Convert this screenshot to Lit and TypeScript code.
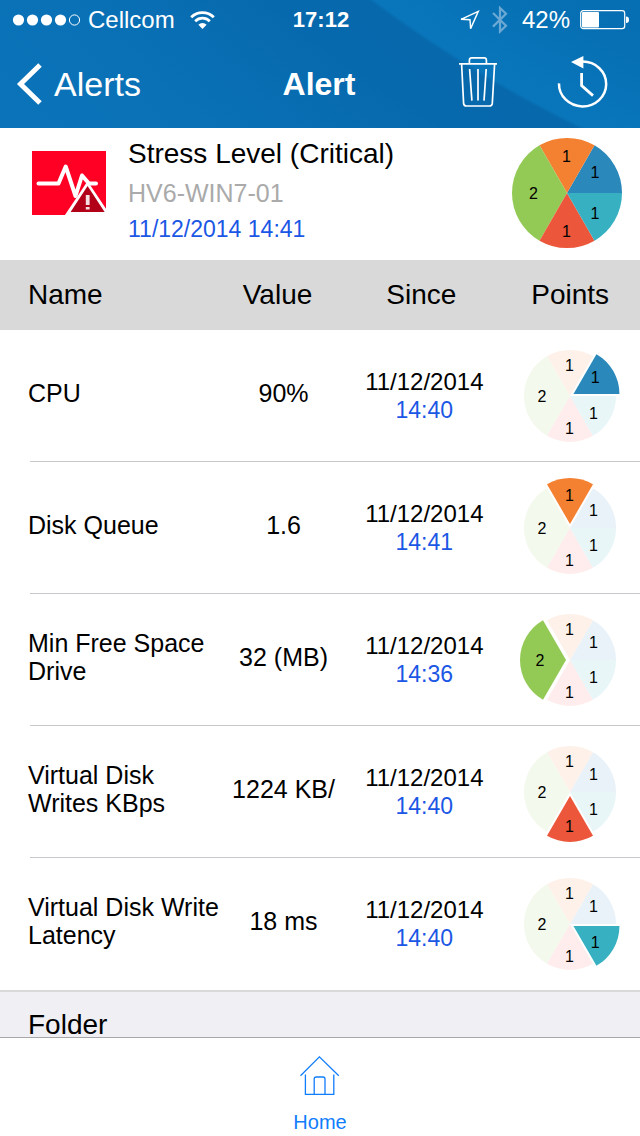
import { LitElement, html, svg, css } from "lit";
import { customElement, property } from "lit/decorators.js";
import { classMap } from "lit/directives/class-map.js";

type Slice = {
  key: string;
  from: number;
  to: number;
  points: number;
  color: string;
  faded: string;
  /** Label centre as a share of the pie radius. */
  lx: number;
  ly: number;
};

const SLICES: Slice[] = [
  { key: "cpu", from: -60, to: 0, points: 1, color: "#2a88ba", faded: "#e9f2f8", lx: 0.51, ly: -0.36 },
  { key: "queue", from: -120, to: -60, points: 1, color: "#f48031", faded: "#fdf1e9", lx: -0.01, ly: -0.66 },
  { key: "space", from: 120, to: 240, points: 2, color: "#93ca55", faded: "#f3f9ed", lx: -0.61, ly: 0.02 },
  { key: "writes", from: 60, to: 120, points: 1, color: "#ec563a", faded: "#feedec", lx: -0.01, ly: 0.71 },
  { key: "latency", from: 0, to: 60, points: 1, color: "#37b1c1", faded: "#e8f6f8", lx: 0.51, ly: 0.39 },
];

const rad = (deg: number) => (deg * Math.PI) / 180;

@customElement("points-pie")
class PointsPie extends LitElement {
  @property({ type: Number }) radius = 46;
  @property() active = "";

  static styles = css`
    :host {
      display: inline-block;
      vertical-align: middle;
      line-height: 0;
    }
    text {
      font: 16px "Liberation Sans", Arial, sans-serif;
      text-anchor: middle;
    }
  `;

  render() {
    const r = this.radius;
    const pad = this.active ? 4 : 0;
    const half = r + pad;
    return html`<svg width=${half * 2} height=${half * 2} viewBox="${-half} ${-half} ${half * 2} ${half * 2}" role="img" aria-label="Points">
      ${SLICES.map((s) => {
        const on = this.active === s.key;
        const mid = rad((s.from + s.to) / 2);
        const ox = on ? Math.cos(mid) * 4 : 0;
        const oy = on ? Math.sin(mid) * 4 : 0;
        const x1 = ox + r * Math.cos(rad(s.from));
        const y1 = oy + r * Math.sin(rad(s.from));
        const x2 = ox + r * Math.cos(rad(s.to));
        const y2 = oy + r * Math.sin(rad(s.to));
        return svg`
          <path fill=${this.active && !on ? s.faded : s.color}
            d="M${ox} ${oy}L${x1} ${y1}A${r} ${r} 0 0 1 ${x2} ${y2}Z"></path>
          <text x=${s.lx * r + ox / 2} y=${s.ly * r + oy / 2 + 5}>${s.points}</text>`;
      })}
    </svg>`;
  }
}

type Row = { key: string; name: string; value: string; date: string; time: string };

const ROWS: Row[] = [
  { key: "cpu", name: "CPU", value: "90%", date: "11/12/2014", time: "14:40" },
  { key: "queue", name: "Disk Queue", value: "1.6", date: "11/12/2014", time: "14:41" },
  { key: "space", name: "Min Free Space Drive", value: "32 (MB)", date: "11/12/2014", time: "14:36" },
  { key: "writes", name: "Virtual Disk Writes KBps", value: "1224 KB/", date: "11/12/2014", time: "14:40" },
  { key: "latency", name: "Virtual Disk Write Latency", value: "18 ms", date: "11/12/2014", time: "14:40" },
];

@customElement("app-root")
class AppRoot extends LitElement {
  static styles = css`
    :host {
      display: flex;
      flex-direction: column;
      height: 100vh;
      background: #fff;
      color: #000;
      font-family: "Liberation Sans", Arial, sans-serif;
      font-size: 24px;
      line-height: 28px;
    }
    svg {
      display: block;
      flex: none;
    }
    .top {
      flex: none;
      color: #fff;
      background: radial-gradient(
        circle at calc(100% + 510px) -1040px,
        #0870b3 1080px,
        #066eb2 1180px,
        #0976bb 1297px,
        #0768ac 1301px,
        #0769ad 1360px,
        #0a71b7 1500px,
        #0b74b9 1700px
      );
    }
    .status {
      display: grid;
      grid-template-columns: 1fr auto 1fr;
      align-items: center;
      height: 40px;
      padding: 0 10px 0 12px;
    }
    .cluster {
      display: flex;
      align-items: center;
    }
    .carrier {
      padding: 0 15px 0 8px;
    }
    .clock {
      font-weight: bold;
      font-size: 22px;
    }
    .end {
      justify-content: flex-end;
    }
    .bluetooth {
      margin: 0 14px 0 12px;
    }
    .battery {
      margin-left: 10px;
    }
    .nav {
      display: grid;
      grid-template-columns: 1fr auto 1fr;
      align-items: center;
      height: 88px;
      padding: 0 32px 0 16px;
    }
    .back {
      display: flex;
      align-items: center;
      gap: 12px;
      color: inherit;
      text-decoration: none;
      font-size: 34px;
      line-height: 40px;
    }
    h1 {
      margin: 0 0 0 14px;
      font-size: 32px;
      line-height: 40px;
    }
    .actions {
      display: flex;
      align-items: center;
      justify-content: flex-end;
      gap: 60px;
      margin-bottom: 4px;
    }
    button {
      padding: 0;
      border: 0;
      background: none;
      color: inherit;
    }
    main {
      flex: 1;
      min-height: 0;
      overflow-y: auto;
      scrollbar-width: none;
    }
    .summary {
      display: flex;
      align-items: center;
      gap: 22px;
      height: 132px;
      padding: 0 18px 0 32px;
      box-sizing: border-box;
    }
    .stress {
      margin-bottom: 22px;
    }
    .about {
      flex: 1;
      margin-bottom: 8px;
    }
    .total {
      margin-bottom: 2px;
    }
    h2 {
      margin: 0;
      font-weight: normal;
      font-size: 28px;
      line-height: 40px;
    }
    .host {
      color: #aaa;
      font-size: 25px;
      line-height: 38px;
    }
    .stamp {
      font-size: 23px;
      line-height: 34px;
    }
    .blue {
      color: #1b57e5;
    }
    table {
      width: 100%;
      border-collapse: collapse;
      table-layout: fixed;
    }
    .c-name {
      width: 34.8%;
    }
    .c-value {
      width: 19%;
    }
    .c-since {
      width: 25%;
    }
    th {
      height: 70px;
      padding: 0;
      background: #d9d9d9;
      font-weight: normal;
      font-size: 28px;
    }
    td {
      height: 132px;
      padding: 0;
      text-align: center;
      font-size: 25px;
    }
    th.name,
    td.name {
      padding-left: 28px;
      text-align: left;
    }
    th.value {
      padding-right: 12px;
    }
    th.since {
      padding-right: 6px;
    }
    td.name,
    td.value {
      padding-bottom: 6px;
      box-sizing: border-box;
    }
    .points {
      padding-right: 4px;
    }
    .ruled {
      background: linear-gradient(#c8c7cc, #c8c7cc) 30px 100% / 100% 1px no-repeat;
    }
    td.since {
      font-size: 24px;
    }
    .since time {
      display: block;
    }
    .since .blue {
      font-size: 23px;
    }
    .folder {
      height: 72px;
      padding: 22px 28px 0;
      border-top: 2px solid #d9d9d9;
      box-sizing: border-box;
      background: #efeff4;
    }
    .folder h2 {
      line-height: 22px;
    }
    .tabs {
      flex: none;
      display: flex;
      justify-content: center;
      border-top: 1px solid #a7a7ab;
      background: #fff;
    }
    .tab {
      display: flex;
      flex-direction: column;
      align-items: center;
      gap: 14px;
      padding: 18px 20px 2px;
      color: #107dfc;
      text-decoration: none;
      font-size: 20px;
      line-height: 24px;
    }
  `;

  private statusBar() {
    return html`<div class="status">
      <div class="cluster">
        <svg width="68" height="12" viewBox="0 0 68 12" fill="#fff">
          ${[6.5, 20.5, 34.5, 48.5].map((x) => svg`<circle cx=${x} cy="6" r="5.6"></circle>`)}
          <circle cx="62.5" cy="6" r="5.1" fill="none" stroke="#fff"></circle>
        </svg>
        <span class="carrier">Cellcom</span>
        <svg width="25" height="18" viewBox="0 0 25 18" fill="none" stroke="#fff" stroke-width="2.8">
          <path d="M1.2 6.2A16 16 0 0 1 23.8 6.2"></path>
          <path d="M5.2 10.2A10.4 10.4 0 0 1 19.8 10.2"></path>
          <path d="M12.5 18L8.4 13.8A5.8 5.8 0 0 1 16.6 13.8Z" fill="#fff" stroke="none"></path>
        </svg>
      </div>
      <span class="clock">17:12</span>
      <div class="cluster end">
        <svg width="21" height="21" viewBox="0 0 21 21" fill="none" stroke="#fff" stroke-width="1.4">
          <path d="M19.3 1.4L2 9.3L11 9.7L11.6 18.6Z"></path>
        </svg>
        <svg class="bluetooth" width="16" height="28" viewBox="0 0 16 28" fill="none" stroke="#6ba9d4" stroke-width="2.2">
          <path d="M1 7L14 19.8L8 25.5V2L14 7.8L1 20.6"></path>
        </svg>
        <span>42%</span>
        <svg class="battery" width="50" height="20" viewBox="0 0 50 20">
          <rect x="0.7" y="0.7" width="44" height="18" rx="2.6" fill="none" stroke="#fff" stroke-width="1.2"></rect>
          <rect x="2" y="2" width="17" height="15.5" rx="1" fill="#fff"></rect>
          <path d="M46 6.5Q49 6.5 49 9.8T46 13Z" fill="#fff"></path>
        </svg>
      </div>
    </div>`;
  }

  private navBar() {
    return html`<nav class="nav">
      <a class="back" href="#alerts">
        <svg width="26" height="42" viewBox="0 0 26 42" fill="none" stroke="#fff" stroke-width="5">
          <path d="M24 2L4.5 21L24 40"></path>
        </svg>
        Alerts
      </a>
      <h1>Alert</h1>
      <div class="actions">
        <button type="button" aria-label="Delete">
          <svg width="38" height="50" viewBox="0 0 38 50" fill="none" stroke="#fff" stroke-width="1.7">
            <path d="M0 6.8H38"></path>
            <path d="M10.4 6.5V3.2Q10.4 0.9 12.8 0.9H25Q27.4 0.9 27.4 3.2V6.5"></path>
            <path d="M2.6 7L4.6 46.4Q4.8 49 7.4 49H30.4Q33 49 33.3 46.4L35.6 7"></path>
            <path d="M10.6 12L12.9 43.6M19 12V43.6M27.2 12L25 43.6"></path>
          </svg>
        </button>
        <button type="button" aria-label="History">
          <svg width="51" height="52" viewBox="0 0 51 52" fill="none" stroke="#fff" stroke-width="2.5">
            <path d="M2 27.4A23.6 22.4 0 1 0 25.6 5.6"></path>
            <path d="M14 6L26.4 0V12.4Z" fill="#fff" stroke="none"></path>
            <path d="M24.6 17V29.6L36 39.6" stroke-width="2.8"></path>
          </svg>
        </button>
      </div>
    </nav>`;
  }

  private summary() {
    return html`<section class="summary">
      <svg class="stress" width="74" height="64" viewBox="0 0 74 64">
        <rect width="74" height="64" fill="#ff0024"></rect>
        <path d="M6.5 32.5H26.5L33.7 15.5L43.5 45L50 24.5L57 32.5H64" fill="none" stroke="#fff"
          stroke-width="4" stroke-linejoin="round" stroke-linecap="round"></path>
        <path d="M55.6 31.5L33.2 65H78Z" fill="#fff" stroke="#fff" stroke-width="1.5"></path>
        <path d="M55.6 35L38.6 61H72.6Z" fill="#b10017"></path>
        <path d="M53.8 44H57.6V54H53.8ZM53.8 56H57.6V58.6H53.8Z" fill="#f6dfe2"></path>
      </svg>
      <div class="about">
        <h2>Stress Level (Critical)</h2>
        <div class="host">HV6-WIN7-01</div>
        <div class="stamp blue">11/12/2014 14:41</div>
      </div>
      <points-pie class="total" .radius=${55}></points-pie>
    </section>`;
  }

  private counters() {
    return html`<table>
      <colgroup>
        <col class="c-name" />
        <col class="c-value" />
        <col class="c-since" />
        <col />
      </colgroup>
      <thead>
        <tr>
          <th class="name" scope="col">Name</th>
          <th class="value" scope="col">Value</th>
          <th class="since" scope="col">Since</th>
          <th class="points" scope="col">Points</th>
        </tr>
      </thead>
      <tbody>
        ${ROWS.map(
          (r, i) => html`<tr class=${classMap({ ruled: i < ROWS.length - 1 })}>
            <td class="name">${r.name}</td>
            <td class="value">${r.value}</td>
            <td class="since"><time>${r.date}</time><time class="blue">${r.time}</time></td>
            <td class="points"><points-pie .active=${r.key}></points-pie></td>
          </tr>`,
        )}
      </tbody>
    </table>`;
  }

  render() {
    return html`
      <header class="top">${this.statusBar()}${this.navBar()}</header>
      <main>
        ${this.summary()} ${this.counters()}
        <section class="folder"><h2>Folder</h2></section>
      </main>
      <footer class="tabs">
        <a class="tab" href="#home">
          <svg width="40" height="40" viewBox="0 0 40 40" fill="none" stroke="#107dfc" stroke-width="1.3">
            <path d="M0.5 19.8L19.4 0.9L38.8 19.8"></path>
            <path d="M5.4 18.6V38.4H33.8V18.6"></path>
            <path d="M14.2 38.4V23Q14.2 21 16.2 21H23Q25 21 25 23V38.4"></path>
          </svg>
          Home
        </a>
      </footer>
    `;
  }
}
